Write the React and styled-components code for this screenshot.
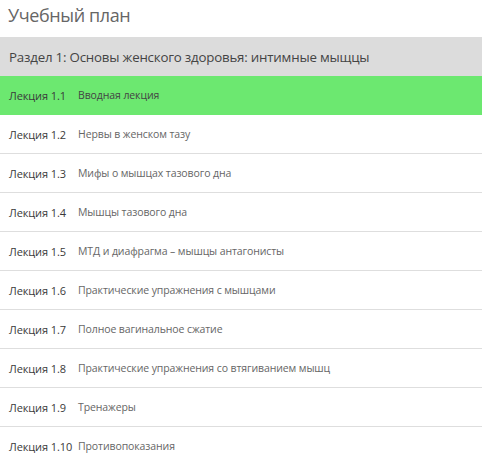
import React from "react";
import styled, { createGlobalStyle } from "styled-components";

const Global = createGlobalStyle`
    body {
        margin: 0;
        background: #fff;
        font-family: "Open Sans", "Noto Sans", sans-serif;
    }
`;

const Wrapper = styled.div`
    width: 482px;
`;

const Title = styled.h2`
    margin: 0;
    height: 37px;
    padding: 3px 0 0 8px;
    box-sizing: border-box;
    font-size: 18px;
    font-weight: 400;
    color: #666;
    letter-spacing: -0.4px;
`;

const Section = styled.div`
    height: 39px;
    display: flex;
    align-items: center;
    padding-left: 9px;
    background: #dcdcdc;
    font-size: 13.3px;
    color: #444;
    letter-spacing: -0.2px;
`;

const Row = styled.div`
    height: 38px;
    display: flex;
    align-items: center;
    padding-left: 9px;
    background: ${(p) => (p.$active ? "#6ce870" : "#fff")};
    border-bottom: 1px solid ${(p) => (p.$active ? "#6ce870" : "#dedede")};
`;

const Num = styled.span`
    width: 69px;
    flex-shrink: 0;
    font-size: 11px;
    color: #3a3a3a;
    letter-spacing: -0.1px;
`;

const Name = styled.span`
    font-size: 10.5px;
    color: ${(p) => (p.$active ? "#444" : "#666")};
    letter-spacing: -0.1px;
`;

const lessons = [
    "Вводная лекция",
    "Нервы в женском тазу",
    "Мифы о мышцах тазового дна",
    "Мышцы тазового дна",
    "МТД и диафрагма – мышцы антагонисты",
    "Практические упражнения с мышцами",
    "Полное вагинальное сжатие",
    "Практические упражнения со втягиванием мышц",
    "Тренажеры",
    "Противопоказания",
];

export default () => {
    return (
        <Wrapper>
            <Global />
            <Title>Учебный план</Title>
            <Section>Раздел 1: Основы женского здоровья: интимные мыщцы</Section>
            {lessons.map((name, i) => (
                <Row key={i} $active={i === 0}>
                    <Num>Лекция 1.{i + 1}</Num>
                    <Name $active={i === 0}>{name}</Name>
                </Row>
            ))}
        </Wrapper>
    );
};
